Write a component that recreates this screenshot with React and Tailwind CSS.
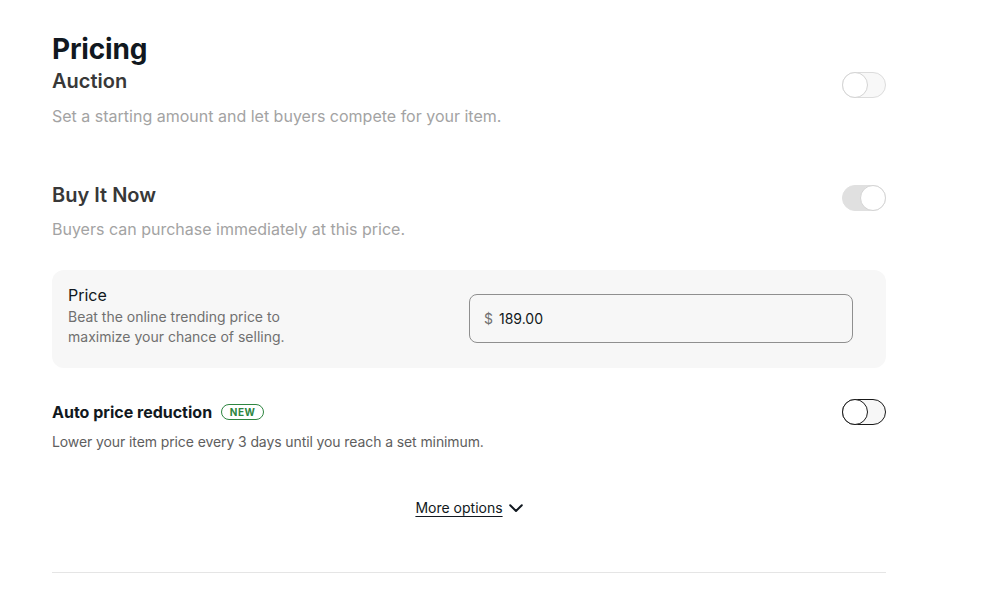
import React from "react";

function Toggle({ on, variant }) {
  const track =
    variant === "dark"
      ? "border-[#191919] bg-[#f7f7f7]"
      : on
      ? "border-[#e0e0e0] bg-[#e0e0e0]"
      : "border-[#dcdcdc] bg-[#f8f8f8]";
  const knob =
    variant === "dark" ? "border-[#191919]" : "border-[#d4d4d4]";
  return (
    <div className={`relative h-[26px] w-[44px] shrink-0 rounded-full border ${track}`}>
      <div
        className={`absolute top-[-1px] h-[26px] w-[26px] rounded-full border bg-white ${knob} ${
          on ? "right-[-1px]" : "left-[-1px]"
        }`}
      />
    </div>
  );
}

function Chevron() {
  return (
    <svg width="14" height="9" viewBox="0 0 14 9" fill="none" className="ml-[6px]">
      <path d="M1.2 1.2 7 7l5.8-5.8" stroke="#111820" strokeWidth="2" strokeLinecap="round" strokeLinejoin="round" />
    </svg>
  );
}

export default function App() {
  return (
    <div className="min-h-[604px] bg-white font-['Inter','Liberation_Sans',sans-serif] text-[#111820]">
      <div className="ml-[52px] w-[834px]">
        <h2 className="pt-[31px] text-[28px] font-bold leading-[36px] tracking-[-0.2px] text-[#111820]">
          Pricing
        </h2>

        {/* Auction */}
        <div className="flex items-start justify-between">
          <div>
            <div className="text-[20px] font-semibold leading-[28px] text-[#383838]">Auction</div>
            <p className="mt-[9px] text-[16px] leading-[24px] text-[#a3a3a3]">
              Set a starting amount and let buyers compete for your item.
            </p>
          </div>
          <div className="mt-[5px]">
            <Toggle on={false} />
          </div>
        </div>

        {/* Buy It Now */}
        <div className="mt-[53px] flex items-start justify-between">
          <div>
            <div className="text-[20px] font-semibold leading-[28px] text-[#383838]">Buy It Now</div>
            <p className="mt-[8px] text-[16px] leading-[24px] text-[#a3a3a3]">
              Buyers can purchase immediately at this price.
            </p>
          </div>
          <div className="mt-[4px]">
            <Toggle on={true} />
          </div>
        </div>

        {/* Price box */}
        <div className="mt-[29px] flex items-start justify-between rounded-[12px] bg-[#f7f7f7] py-[24px] pl-[16px] pr-[33px]">
          <div className="mt-[-11px] mb-[-3px] w-[260px]">
            <div className="text-[16px] leading-[24px] text-[#111820]">Price</div>
            <p className="text-[14px] leading-[20px] text-[#707070]">
              Beat the online trending price to maximize your chance of selling.
            </p>
          </div>
          <div className="flex h-[49px] w-[384px] items-center rounded-[8px] border border-[#8f8f8f] bg-[#f7f7f7] pl-[14px]">
            <span className="text-[14px] text-[#707070]">$</span>
            <span className="ml-[6px] text-[14px] text-[#111820]">189.00</span>
          </div>
        </div>

        {/* Auto price reduction */}
        <div className="mt-[32px] flex items-start justify-between">
          <div>
            <div className="flex items-center">
              <span className="text-[16px] font-bold leading-[24px] text-[#111820]">Auto price reduction</span>
              <span className="ml-[9px] flex h-[16px] w-[43px] items-center justify-center rounded-full border border-[#2e8540] text-[10px] font-bold tracking-[0.6px] text-[#2e8540]">
                NEW
              </span>
            </div>
            <p className="mt-[8px] text-[14px] leading-[20px] tracking-[-0.1px] text-[#5e5e5e]">
              Lower your item price every 3 days until you reach a set minimum.
            </p>
          </div>
          <div className="mt-[-1px]">
            <Toggle on={false} variant="dark" />
          </div>
        </div>

        {/* More options */}
        <div className="mt-[46px] flex items-center justify-center">
          <button className="flex items-center text-[14px] leading-[20px] text-[#111820]">
            <span className="underline underline-offset-[3px]">More options</span>
            <Chevron />
          </button>
        </div>

        <div className="mt-[54px] h-px bg-[#e5e5e5]" />
      </div>
    </div>
  );
}
